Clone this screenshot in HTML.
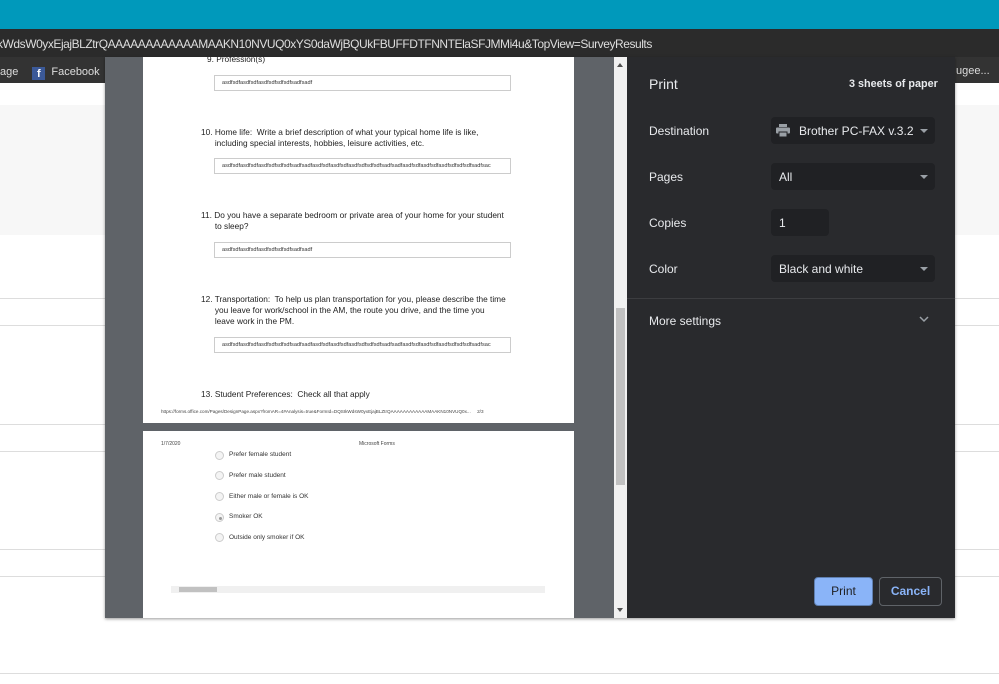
<!DOCTYPE html><html><head><style>
*{margin:0;padding:0;box-sizing:border-box}
body{width:999px;height:684px;overflow:hidden;position:relative;background:#fff;font-family:"Liberation Sans",sans-serif}
.a{position:absolute}
.q{position:absolute;font-size:8.3px;color:#222;line-height:11px;white-space:nowrap}
.in{position:absolute;left:214px;width:297px;height:16px;border:1px solid #ccc;font-size:5.6px;color:#333;padding:4px 0 0 7px;white-space:nowrap;overflow:visible}
.lab{position:absolute;left:649px;font-size:12px;color:#e8eaed}
.sel{position:absolute;left:771px;width:164px;height:27px;background:#202124;border-radius:4px;color:#e8eaed;font-size:12px;padding:7px 8px}
.car{position:absolute;right:7px;top:12px;width:0;height:0;border-left:4px solid transparent;border-right:4px solid transparent;border-top:4px solid #9aa0a6}
.hl{position:absolute;left:0;width:999px;height:1px;background:#ddd}
.r{position:absolute;left:215px;width:9px;height:9px;border-radius:50%;border:1px solid #ccc;background:#f4f4f4}
.rt{position:absolute;left:229px;font-size:6.5px;color:#333}
</style></head><body>
<div class="a" style="left:0;top:0;width:999px;height:29px;background:#0099bb"></div>
<div class="a" style="left:0;top:29px;width:999px;height:28px;background:#2b2b2b;color:#ddd;font-size:12px;padding:8px 0 0 0;white-space:nowrap;overflow:hidden;letter-spacing:-0.45px"><span style="margin-left:-3px">kWdsW0yxEjajBLZtrQAAAAAAAAAAAAMAAKN10NVUQ0xYS0daWjBQUkFBUFFDTFNNTElaSFJMMi4u&amp;TopView=SurveyResults</span></div>
<div class="a" style="left:0;top:57px;width:999px;height:26px;background:#333;color:#ddd;font-size:11px;padding:9px 0 0 0;white-space:nowrap">age<span style="display:inline-block;width:13px;height:13px;background:#3b5998;color:#fff;font-weight:bold;font-size:11px;text-align:center;line-height:14px;margin:0 6px 0 14px;vertical-align:-2px">f</span>Facebook<span style="position:absolute;left:956px;top:8px">ugee...</span></div>
<div class="a" style="left:0;top:105px;width:999px;height:130px;background:#f7f7f7"></div>
<div class="hl" style="top:298px"></div><div class="hl" style="top:325px"></div>
<div class="hl" style="top:424px"></div><div class="hl" style="top:451px"></div>
<div class="hl" style="top:549px"></div><div class="hl" style="top:576px"></div>
<div class="hl" style="top:673px"></div>
<div class="a" style="left:105px;top:57px;width:850px;height:561px;background:#5f6368;box-shadow:0 1px 3px rgba(0,0,0,.4)"></div>
<div class="a" style="left:143px;top:57px;width:431px;height:366px;background:#fff;overflow:hidden">
<div class="q" style="left:64px;top:-3px">9. Profession(s)</div>
<div class="in" style="top:18px;left:71px">asdfsdfasdfsdfasdfsdfsdfsdfsadfsadf</div>
<div class="q" style="left:58px;top:70px">10. Home life:&nbsp; Write a brief description of what your typical home life is like,<br>&nbsp;&nbsp;&nbsp;&nbsp;&nbsp; including special interests, hobbies, leisure activities, etc.</div>
<div class="in" style="top:101px;left:71px">asdfsdfasdfsdfasdfsdfsdfsdfsadfsadfasdfsdfasdfsdfasdfsdfsdfsdfsadfsadfasdfsdfasdfsdfasdfsdfsdfsdfsadfsac</div>
<div class="q" style="left:58px;top:153px">11. Do you have a separate bedroom or private area of your home for your student<br>&nbsp;&nbsp;&nbsp;&nbsp;&nbsp; to sleep?</div>
<div class="in" style="top:185px;left:71px">asdfsdfasdfsdfasdfsdfsdfsdfsadfsadf</div>
<div class="q" style="left:58px;top:237px">12. Transportation:&nbsp; To help us plan transportation for you, please describe the time<br>&nbsp;&nbsp;&nbsp;&nbsp;&nbsp; you leave for work/school in the AM, the route you drive, and the time you<br>&nbsp;&nbsp;&nbsp;&nbsp;&nbsp; leave work in the PM.</div>
<div class="in" style="top:280px;left:71px">asdfsdfasdfsdfasdfsdfsdfsdfsadfsadfasdfsdfasdfsdfasdfsdfsdfsdfsadfsadfasdfsdfasdfsdfasdfsdfsdfsdfsadfsac</div>
<div class="q" style="left:58px;top:332px">13. Student Preferences:&nbsp; Check all that apply</div>
<div class="q" style="left:18px;top:349px;font-size:4.6px;color:#444">https://forms.office.com/Pages/DesignPage.aspx?fromAR=4#Analysis=true&amp;FormId=DQSIkWdsW0yxEjajBLZtrQAAAAAAAAAAAAMAAKN10NVUQ0x...&nbsp;&nbsp;&nbsp;&nbsp; 2/3</div>
</div>
<div class="a" style="left:143px;top:431px;width:431px;height:187px;background:#fff">
<div class="q" style="left:18px;top:8px;font-size:5px;color:#444">1/7/2020</div>
<div class="q" style="left:216px;top:8px;font-size:5px;color:#444">Microsoft Forms</div>
<div class="a" style="left:28px;top:155px;width:374px;height:7px;background:#f0f0f0"><div class="a" style="left:8px;top:1px;width:38px;height:5px;background:#c1c1c1"></div></div>
</div>
<div class="r" style="top:451px"></div><div class="rt" style="top:451px">Prefer female student</div>
<div class="r" style="top:471px"></div><div class="rt" style="top:472px">Prefer male student</div>
<div class="r" style="top:492px"></div><div class="rt" style="top:493px">Either male or female is OK</div>
<div class="r" style="top:513px"><div class="a" style="left:2.5px;top:2.5px;width:3px;height:3px;border-radius:50%;background:#999"></div></div><div class="rt" style="top:513px">Smoker OK</div>
<div class="r" style="top:533px"></div><div class="rt" style="top:534px">Outside only smoker if OK</div>
<div class="a" style="left:614px;top:57px;width:13px;height:561px;background:#f1f1f1"><div class="a" style="left:2px;top:251px;width:9px;height:177px;background:#c1c1c1"></div>
<div class="a" style="left:3px;top:6px;border-left:3px solid transparent;border-right:3px solid transparent;border-bottom:4px solid #505050"></div>
<div class="a" style="left:3px;top:551px;border-left:3px solid transparent;border-right:3px solid transparent;border-top:4px solid #505050"></div></div>
<div class="a" style="left:627px;top:57px;width:328px;height:561px;background:#292a2d"></div>
<div class="lab" style="top:76px;font-size:14px">Print</div>
<div class="lab" style="left:849px;top:78px;font-weight:bold;font-size:10.8px">3 sheets of paper</div>
<div class="lab" style="top:124px">Destination</div>
<div class="sel" style="top:117px;padding-left:28px">Brother PC-FAX v.3.2<div class="car"></div>
<svg class="a" style="left:5px;top:7px" width="14" height="13" viewBox="0 0 14 13"><rect x="3" y="0" width="8" height="3" fill="#9aa0a6"/><rect x="0" y="3.5" width="14" height="6" rx="1" fill="#9aa0a6"/><rect x="3" y="8" width="8" height="5" fill="#9aa0a6" stroke="#202124" stroke-width="1"/></svg></div>
<div class="lab" style="top:170px">Pages</div>
<div class="sel" style="top:163px">All<div class="car"></div></div>
<div class="lab" style="top:216px">Copies</div>
<div class="sel" style="top:209px;width:58px">1</div>
<div class="lab" style="top:262px">Color</div>
<div class="sel" style="top:255px">Black and white<div class="car"></div></div>
<div class="a" style="left:627px;top:298px;width:328px;height:1px;background:#3c3d40"></div>
<div class="lab" style="top:314px">More settings</div>
<svg class="a" style="left:919px;top:316px" width="10" height="7"><path d="M1 1 L5 5 L9 1" stroke="#9aa0a6" stroke-width="1.5" fill="none"/></svg>
<div class="a" style="left:814px;top:577px;width:59px;height:29px;background:#8ab4f8;border:1px solid #5f7fb0;border-radius:4px;color:#202124;font-size:12px;text-align:center;line-height:27px">Print</div>
<div class="a" style="left:879px;top:577px;width:63px;height:29px;border:1px solid #5f6368;border-radius:4px;color:#8ab4f8;font-size:12px;text-align:center;line-height:27px;font-weight:bold">Cancel</div>
</body></html>
